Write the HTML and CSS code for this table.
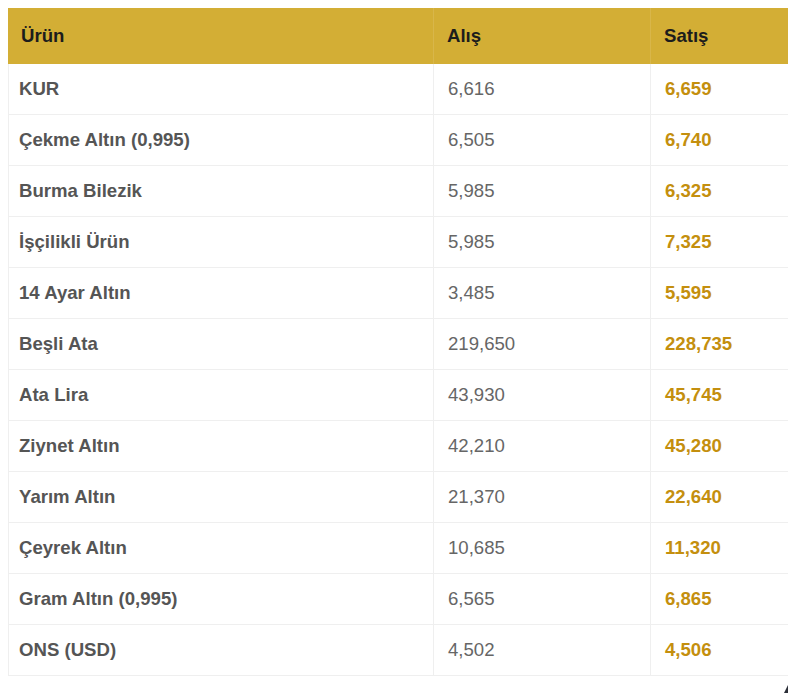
FILE: index.html
```html
<!DOCTYPE html>
<html lang="tr">
<head>
<meta charset="utf-8">
<title>Altın Fiyatları</title>
<link rel="stylesheet" href="styles.css">
</head>
<body>
<table class="price-table">
  <thead>
    <tr>
      <th class="col-name">Ürün</th>
      <th class="col-buy">Alış</th>
      <th class="col-sell">Satış</th>
    </tr>
  </thead>
  <tbody>
    <tr><td class="name">KUR</td><td class="buy">6,616</td><td class="sell">6,659</td></tr>
    <tr><td class="name">Çekme Altın (0,995)</td><td class="buy">6,505</td><td class="sell">6,740</td></tr>
    <tr><td class="name">Burma Bilezik</td><td class="buy">5,985</td><td class="sell">6,325</td></tr>
    <tr><td class="name">İşçilikli Ürün</td><td class="buy">5,985</td><td class="sell">7,325</td></tr>
    <tr><td class="name">14 Ayar Altın</td><td class="buy">3,485</td><td class="sell">5,595</td></tr>
    <tr><td class="name">Beşli Ata</td><td class="buy">219,650</td><td class="sell">228,735</td></tr>
    <tr><td class="name">Ata Lira</td><td class="buy">43,930</td><td class="sell">45,745</td></tr>
    <tr><td class="name">Ziynet Altın</td><td class="buy">42,210</td><td class="sell">45,280</td></tr>
    <tr><td class="name">Yarım Altın</td><td class="buy">21,370</td><td class="sell">22,640</td></tr>
    <tr><td class="name">Çeyrek Altın</td><td class="buy">10,685</td><td class="sell">11,320</td></tr>
    <tr><td class="name">Gram Altın (0,995)</td><td class="buy">6,565</td><td class="sell">6,865</td></tr>
    <tr><td class="name">ONS (USD)</td><td class="buy">4,502</td><td class="sell">4,506</td></tr>
  </tbody>
</table>
<div class="corner-grip"></div>
</body>
</html>
```

FILE: styles.css
```css
html {
  overflow: hidden;
}

body {
  margin: 8px 0 8px 8px;
  background: #ffffff;
  font-family: "Liberation Sans", Arial, sans-serif;
  font-size: 18.6px;
}

.price-table {
  table-layout: fixed;
  width: 780px;
  border-collapse: separate;
  border-spacing: 0;
}

.price-table th,
.price-table td {
  box-sizing: border-box;
  text-align: left;
  line-height: 22px;
  white-space: nowrap;
}

.price-table th {
  background: #d3ae35;
  color: #1c1c1c;
  font-weight: bold;
  padding: 17px 13px 17px;
  border-right: 1px solid #d8b64a;
}

.price-table th.col-name {
  width: 426px;
  padding-left: 13px;
}

.price-table th.col-buy {
  width: 217px;
}

.price-table th.col-sell {
  width: 137px;
  border-right: none;
}

.price-table td {
  padding: 14px 14px;
  border-right: 1px solid #efefef;
  border-bottom: 1px solid #efefef;
}

.price-table td.sell {
  border-right: none;
}

.price-table td.name {
  border-left: 1px solid #efefef;
  padding-left: 10px;
  font-weight: bold;
  color: #555555;
}

.price-table td.buy {
  color: #666666;
}

.price-table td.sell {
  font-weight: bold;
  color: #c48f0e;
}

.corner-grip {
  position: fixed;
  right: 0;
  bottom: 0;
  width: 0;
  height: 0;
  border-left: 4px solid transparent;
  border-bottom: 8px solid #2b2f38;
}
```
